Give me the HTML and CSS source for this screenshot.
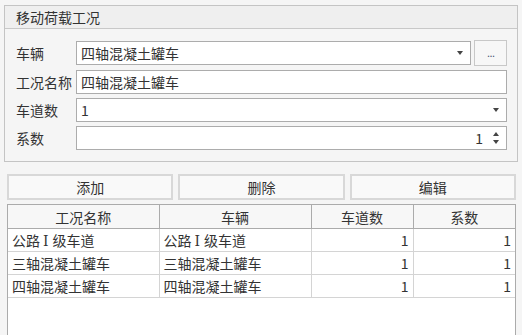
FILE: index.html
```html
<!doctype html>
<html>
<head>
    <meta charset="utf-8">
    <title>移动荷载工况</title>
    <link rel="stylesheet" href="styles.css">
</head>

<body>
    <div class="group">
        <div class="group-title">移动荷载工况</div>
        <div class="group-body">
            <!-- vehicle -->
            <div class="field-row first">
                <div class="label">车辆</div>
                <div class="field combo">
                    <span class="value">四轴混凝土罐车</span>
                    <span class="arrow"></span>
                </div>
                <div class="more">...</div>
            </div>
            <!-- case name -->
            <div class="field-row">
                <div class="label">工况名称</div>
                <div class="field">
                    <span class="value">四轴混凝土罐车</span>
                </div>
            </div>
            <!-- lanes -->
            <div class="field-row">
                <div class="label">车道数</div>
                <div class="field combo">
                    <span class="value">1</span>
                    <span class="arrow"></span>
                </div>
            </div>
            <!-- factor -->
            <div class="field-row">
                <div class="label">系数</div>
                <div class="field spin">
                    <span class="value num">1</span>
                    <span class="spinner">
                        <span class="up"></span>
                        <span class="down"></span>
                    </span>
                </div>
            </div>
        </div>
    </div>

    <div class="buttons">
        <div class="btn">添加</div>
        <div class="btn">删除</div>
        <div class="btn">编辑</div>
    </div>

    <div class="grid">
        <table>
            <colgroup>
                <col style="width: 151px">
                <col style="width: 152px">
                <col style="width: 102px">
                <col>
            </colgroup>
            <tr>
                <th>工况名称</th>
                <th>车辆</th>
                <th>车道数</th>
                <th>系数</th>
            </tr>
            <tr>
                <td>公路<span class="roman">Ⅰ</span>级车道</td>
                <td>公路<span class="roman">Ⅰ</span>级车道</td>
                <td class="num">1</td>
                <td class="num">1</td>
            </tr>
            <tr>
                <td>三轴混凝土罐车</td>
                <td>三轴混凝土罐车</td>
                <td class="num">1</td>
                <td class="num">1</td>
            </tr>
            <tr>
                <td>四轴混凝土罐车</td>
                <td>四轴混凝土罐车</td>
                <td class="num">1</td>
                <td class="num">1</td>
            </tr>
        </table>
    </div>
</body>

</html>
```

FILE: styles.css
```css
html, body {
    margin: 0;
    height: 100%;
    overflow: hidden;
    background-color: #f5f5f5;
    color: #333;
    font-family: "Noto Sans CJK SC", "Noto Sans", sans-serif;
    font-size: 14px;
}

.group {
    margin: 5px 4px 0 4px;
    border: 1px solid #c4c4c4;
    background-color: #f5f5f5;
}

.group-title {
    height: 22px;
    line-height: 22px;
    padding-left: 11px;
    border-bottom: 1px solid #c8c8c8;
    background-color: #efefef;
}

.group-body {
    padding: 11px 10px 11px 11px;
}

.field-row {
    display: flex;
    align-items: center;
    height: 24px;
    margin-top: 4px;
}

.field-row.first {
    height: 26px;
    margin-top: 0;
}

.label {
    width: 60px;
    flex: none;
}

.field {
    flex: 1;
    display: flex;
    align-items: center;
    box-sizing: border-box;
    height: 24px;
    padding: 0 6px 0 4px;
    border: 1px solid #acacac;
    background-color: white;
}

.value {
    flex: 1;
    line-height: 22px;
}

.num {
    text-align: right;
}

.arrow {
    width: 0;
    height: 0;
    border-left: 3.5px solid transparent;
    border-right: 3.5px solid transparent;
    border-top: 4px solid #444;
    margin-right: 1px;
}

.more {
    flex: none;
    box-sizing: border-box;
    width: 33px;
    height: 26px;
    margin-left: 3px;
    padding-top: 3px;
    border: 1px solid #c8c8c8;
    background-color: #f7f7f7;
    color: #4a5a78;
    font-family: "DejaVu Sans", sans-serif;
    font-size: 11px;
    line-height: 20px;
    text-align: center;
    letter-spacing: -1px;
}

.spin .value {
    padding-right: 10px;
}

.spinner {
    display: flex;
    flex-direction: column;
    gap: 4px;
    margin-right: 1px;
}

.spinner .up {
    width: 0;
    height: 0;
    border-left: 3.5px solid transparent;
    border-right: 3.5px solid transparent;
    border-bottom: 4px solid #444;
}

.spinner .down {
    width: 0;
    height: 0;
    border-left: 3.5px solid transparent;
    border-right: 3.5px solid transparent;
    border-top: 4px solid #444;
}

.buttons {
    display: flex;
    gap: 5px;
    margin: 12px 6px 0 7px;
}

.btn {
    flex: 1;
    height: 22px;
    line-height: 22px;
    text-align: center;
    border: 2px solid #d8d8d8;
    background-color: #f9f9f9;
}

.grid {
    margin: 4px 6px 0 7px;
    height: 131px;
    border: 1px solid #ababab;
    border-bottom: none;
    background-color: white;
}

table {
    width: 100%;
    table-layout: fixed;
    border-collapse: collapse;
}

th {
    height: 23px;
    padding: 0;
    font-weight: normal;
    background-color: #f7f7f7;
    border-right: 1px solid #ababab;
    border-bottom: 1px solid #ababab;
    line-height: 22px;
}

td {
    height: 22px;
    padding: 0 4px;
    border-right: 1px solid #d4d4d4;
    border-bottom: 1px solid #d4d4d4;
    line-height: 22px;
    white-space: nowrap;
    overflow: hidden;
}

th:last-child, td:last-child {
    border-right: none;
}

.roman {
    padding: 0 4px 0 3px;
    line-height: 1;
    font-family: "DejaVu Serif", serif;
    font-size: 14px;
}
```
